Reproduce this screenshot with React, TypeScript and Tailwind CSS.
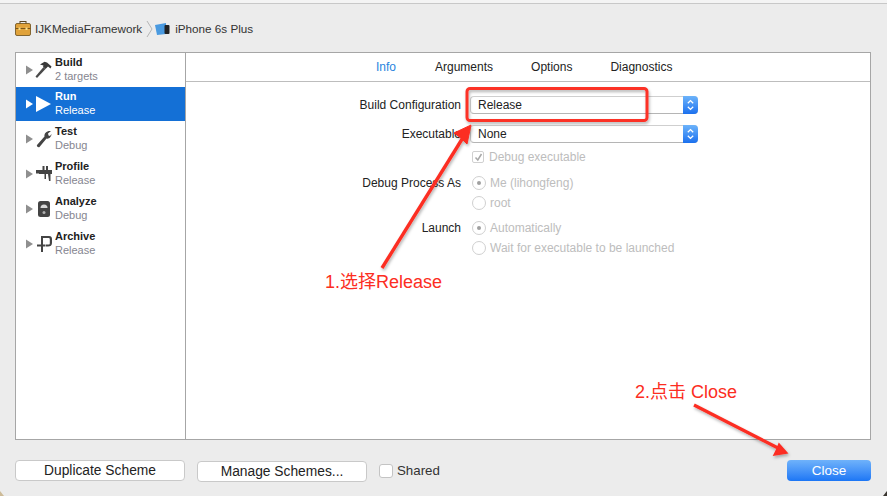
const font = "font-['Liberation_Sans','Noto_Sans_CJK_SC',sans-serif]";

const Disclosure = ({ active }: { active?: boolean }) => (
  <svg width="9" height="10" viewBox="0 0 9 10" className="shrink-0">
    <path d="M1 0.5 L8 5 L1 9.5 Z" fill={active ? "#ffffff" : "#8f8f8f"} />
  </svg>
);

const Hammer = () => (
  <svg width="18" height="18" viewBox="0 0 18 18">
    <path d="M2 17 L0.5 15.5 L8.5 6 L10.5 8 Z" fill="#4a4a4a" />
    <path d="M5 3.5 L9.5 0.8 L12 1.5 L16.5 5.5 L15.5 7.5 L13 5.5 L10.5 8 L8 5.5 L8.5 4.5 Z" fill="#3a3a3a" />
  </svg>
);

const Play = () => (
  <svg width="18" height="18" viewBox="0 0 18 18">
    <path d="M1 1 L16 9 L1 17 Z" fill="#ffffff" />
  </svg>
);

const Wrench = () => (
  <svg width="16" height="18" viewBox="0 0 16 18">
    <path d="M1 15 L8.5 6.5 C8 3.5 10.5 0.5 15 1 L12 3.5 L12.5 5.5 L14 6 L15.5 4 C15.5 7 12.5 9.5 10.5 8.5 L3.5 17 C2.5 17.8 0.2 16.5 1 15 Z" fill="#444444" />
  </svg>
);

const Caliper = () => (
  <svg width="18" height="17" viewBox="0 0 18 17">
    <path d="M1 5 H17 V9 H15.5 V16 H14 L13 9 H11 V14 H9.5 V9 H4 V8.5 H1 Z M7.5 1 H9.5 V5 H7.5 Z M11 1 H13 V5 H11 Z" fill="#444444" />
  </svg>
);

const Gauge = () => (
  <svg width="14" height="18" viewBox="0 0 14 18">
    <rect x="1" y="1" width="12" height="16" rx="2.5" fill="#444444" />
    <path d="M3.5 8 A3.5 3.5 0 0 1 10.5 8 Z" fill="#d8d8d8" />
    <circle cx="7" cy="12.5" r="1.5" fill="#b0b0b0" />
  </svg>
);

const Clamp = () => (
  <svg width="18" height="18" viewBox="0 0 18 18">
    <path d="M6 1 H14 C16.5 1 17 2.5 17 4.5 V8 C17 10.5 15.5 11.5 13 11.5 H10.5 V9.5 H13.5 C14.5 9.5 14.8 9 14.8 8 V4.5 C14.8 3.5 14.5 3 13.5 3 H8 V9.5 H10 V11.5 H8 V17 H6 V11.5 H2 V9.5 H6 Z" fill="#444444" />
  </svg>
);

const schemes = [
  { title: "Build", sub: "2 targets", icon: <Hammer />, h: "h-[34px]" },
  { title: "Run", sub: "Release", icon: <Play />, h: "h-[34px]", active: true },
  { title: "Test", sub: "Debug", icon: <Wrench />, h: "h-[35px]" },
  { title: "Profile", sub: "Release", icon: <Caliper />, h: "h-[35px]" },
  { title: "Analyze", sub: "Debug", icon: <Gauge />, h: "h-[35px]" },
  { title: "Archive", sub: "Release", icon: <Clamp />, h: "h-[35px]" },
];

const SchemeRow = ({ title, sub, icon, h, active }: { title: string; sub: string; icon: React.ReactNode; h: string; active?: boolean }) => (
  <div className={`flex items-center pl-[9px] ${h} ${active ? "bg-[#1470d6]" : ""}`}>
    <Disclosure active={active} />
    <div className="w-[18px] ml-[1px] flex justify-center shrink-0">{icon}</div>
    <div className="ml-[2px] -mt-[2px] flex flex-col">
      <span className={`text-[11px] leading-[14px] font-bold ${active ? "text-white" : "text-[#222222]"}`}>{title}</span>
      <span className={`text-[11px] leading-[14px] ${active ? "text-white" : "text-[#85858f]"}`}>{sub}</span>
    </div>
  </div>
);

const SelectBox = ({ value }: { value: string }) => (
  <div className="w-[228px] h-[18px] flex rounded-[4px] bg-white border border-[#cfcfcf] border-b-[#b5b5b5] border-r-0">
    <span className="flex-1 pl-[7px] text-[12px] leading-[16px] text-[#222222]">{value}</span>
    <span className="w-[15px] -my-px rounded-r-[4px] bg-gradient-to-b from-[#6cb3fa] to-[#1a70ee] flex items-center justify-center">
      <svg width="9" height="14" viewBox="0 0 9 14" fill="none" stroke="#ffffff" strokeWidth="1.3">
        <path d="M1.8 5.3 L4.5 2.6 L7.2 5.3 M1.8 8.7 L4.5 11.4 L7.2 8.7" />
      </svg>
    </span>
  </div>
);

const Radio = ({ on }: { on?: boolean }) => (
  <span className="w-[14px] h-[14px] rounded-full border border-[#d0d0d0] bg-white flex items-center justify-center shrink-0">
    {on && <span className="w-[4px] h-[4px] rounded-full bg-[#a0a0a0]" />}
  </span>
);

const RadioRow = ({ label, text, on, h }: { label?: string; text: string; on?: boolean; h: string }) => (
  <div className={`flex items-center ${h}`}>
    <span className="w-[275px] text-right text-[12px] text-[#222222]">{label}</span>
    <span className="ml-[11px]"><Radio on={on} /></span>
    <span className="ml-[4px] text-[12px] text-[#bdbdbd]">{text}</span>
  </div>
);

const Tab = ({ label, active, cls }: { label: string; active?: boolean; cls: string }) => (
  <span className={`text-[12px] ${cls} ${active ? "text-[#2a84de]" : "text-[#222222]"}`}>{label}</span>
);

const FootButton = ({ label }: { label: string }) => (
  <button className="w-[170px] h-[21px] rounded-[4px] bg-white border border-[#c9c9c9] text-[13.8px] leading-none text-[#222222]">{label}</button>
);

const Annotations = () => (
  <svg className="absolute left-0 top-0 pointer-events-none" width="887" height="496" viewBox="0 0 887 496">
    <defs>
      <filter id="sh" x="-10%" y="-10%" width="130%" height="130%">
        <feDropShadow dx="1" dy="2" stdDeviation="1.5" floodColor="#000000" floodOpacity="0.3" />
      </filter>
    </defs>
    <path d="M0 491 L4 496 L0 496 Z" fill="#cdbb98" />
    <path d="M887 491 L883 496 L887 496 Z" fill="#3a3530" />
    <g filter="url(#sh)">
      <rect x="467" y="88.5" width="180" height="32" rx="3" fill="none" stroke="#fc3028" strokeWidth="3" />
      <path d="M382 268 L464 136" stroke="#fc2d22" strokeWidth="3.4" fill="none" />
      <path d="M471 125 L454 133 L461 138 L467 144 Z" fill="#fc2d22" stroke="#fc2d22" strokeWidth="1" />
      <path d="M694 405 L780 449" stroke="#fc2d22" strokeWidth="3.2" fill="none" />
      <path d="M787 453 L779 444 L777 449 L774 455 Z" fill="#fc2d22" stroke="#fc2d22" strokeWidth="1.5" />
    </g>
  </svg>
);

export default function App() {
  return (
    <div className={`${font} relative w-[887px] h-[496px] overflow-hidden bg-[#ececec] flex flex-col`}>
      <div className="h-[4px] shrink-0 bg-[#f4f4f4] border-b border-[#c8c8c8]" />

      <div className="h-[48px] shrink-0 flex items-center pl-[15px] pt-[1px] text-[#333333] text-[11.7px]">
        <svg width="16" height="15" viewBox="0 0 16 15">
          <rect x="5" y="0.5" width="6" height="3" fill="none" stroke="#5a4520" strokeWidth="1" />
          <rect x="0.5" y="2.5" width="15" height="12" rx="1.5" fill="#e0a23a" stroke="#6a4c18" strokeWidth="0.8" />
          <rect x="0.5" y="7" width="15" height="1" fill="#7a5518" />
          <rect x="3.5" y="6.5" width="2" height="2.5" fill="#f5dd8a" />
          <rect x="10.5" y="6.5" width="2" height="2.5" fill="#f5dd8a" />
        </svg>
        <span className="ml-[4px]">IJKMediaFramework</span>
        <svg width="7" height="18" viewBox="0 0 7 18" className="ml-[4px]" fill="none" stroke="#b5b5b5">
          <path d="M1 1 L6 9 L1 17" />
        </svg>
        <svg width="16" height="14" viewBox="0 0 16 14" className="ml-[1px]">
          <path d="M1 3 L12 1 L12 12 L3 13 Z" fill="#4a9ae0" />
          <rect x="10.5" y="3" width="5" height="9" rx="1" fill="#222222" />
        </svg>
        <span className="ml-[5px]">iPhone 6s Plus</span>
      </div>

      <div className="mx-[15px] w-[856px] h-[388px] shrink-0 flex bg-white border border-[#a6a6a6]">
        <div className="w-[169px] shrink-0 border-r border-[#a6a6a6] box-content">
          {schemes.map((s) => (
            <SchemeRow key={s.title} {...s} />
          ))}
        </div>
        <div className="flex-1 flex flex-col">
          <div className="h-[29px] shrink-0 flex items-center border-b border-[#bdbdbd] pb-[1px]">
            <Tab label="Info" active cls="ml-[190px]" />
            <Tab label="Arguments" cls="ml-[39px]" />
            <Tab label="Options" cls="ml-[38px]" />
            <Tab label="Diagnostics" cls="ml-[38px]" />
          </div>
          <div className="flex flex-col pt-[13px]">
            <div className="flex items-center h-[20px]">
              <span className="w-[275px] text-right text-[12px] text-[#222222]">Build Configuration</span>
              <span className="ml-[9px]"><SelectBox value="Release" /></span>
            </div>
            <div className="flex items-center h-[20px] mt-[9px]">
              <span className="w-[275px] text-right text-[12px] text-[#222222]">Executable</span>
              <span className="ml-[9px]"><SelectBox value="None" /></span>
            </div>
            <div className="flex items-center h-[26px]">
              <span className="ml-[286px] w-[12px] h-[12px] rounded-[2px] border border-[#d0d0d0] bg-white flex items-center justify-center">
                <svg width="9" height="9" viewBox="0 0 9 9" fill="none" stroke="#a8a8a8" strokeWidth="1.5">
                  <path d="M1.5 4.5 L3.8 7 L7.5 1" />
                </svg>
              </span>
              <span className="ml-[5px] text-[12px] text-[#bdbdbd]">Debug executable</span>
            </div>
            <RadioRow label="Debug Process As" text="Me (lihongfeng)" on h="h-[20px] mt-[3px]" />
            <RadioRow text="root" h="h-[20px]" />
            <RadioRow label="Launch" text="Automatically" on h="h-[20px] mt-[5px]" />
            <RadioRow text="Wait for executable to be launched" h="h-[20px]" />
          </div>
        </div>
      </div>

      <div className="flex-1 flex items-center pl-[15px] pr-[16px] pt-[5px]">
        <FootButton label="Duplicate Scheme" />
        <span className="ml-[12px]"><FootButton label="Manage Schemes..." /></span>
        <span className="ml-[12px] w-[14px] h-[14px] rounded-[3px] bg-white border border-[#c4c4c4]" />
        <span className="ml-[4px] text-[13.3px] text-[#333333]">Shared</span>
        <button className="ml-auto w-[84px] h-[21px] rounded-[4px] bg-gradient-to-b from-[#6fb2fa] to-[#1b76f5] text-[13.5px] leading-none text-white">Close</button>
      </div>

      <Annotations />
      <span className="absolute left-[325px] top-[270px] text-[18px] leading-[24px] text-[#fc2d22]">1.选择Release</span>
      <span className="absolute left-[635px] top-[380px] text-[18px] leading-[24px] text-[#fc2d22]">2.点击 Close</span>
    </div>
  );
}
